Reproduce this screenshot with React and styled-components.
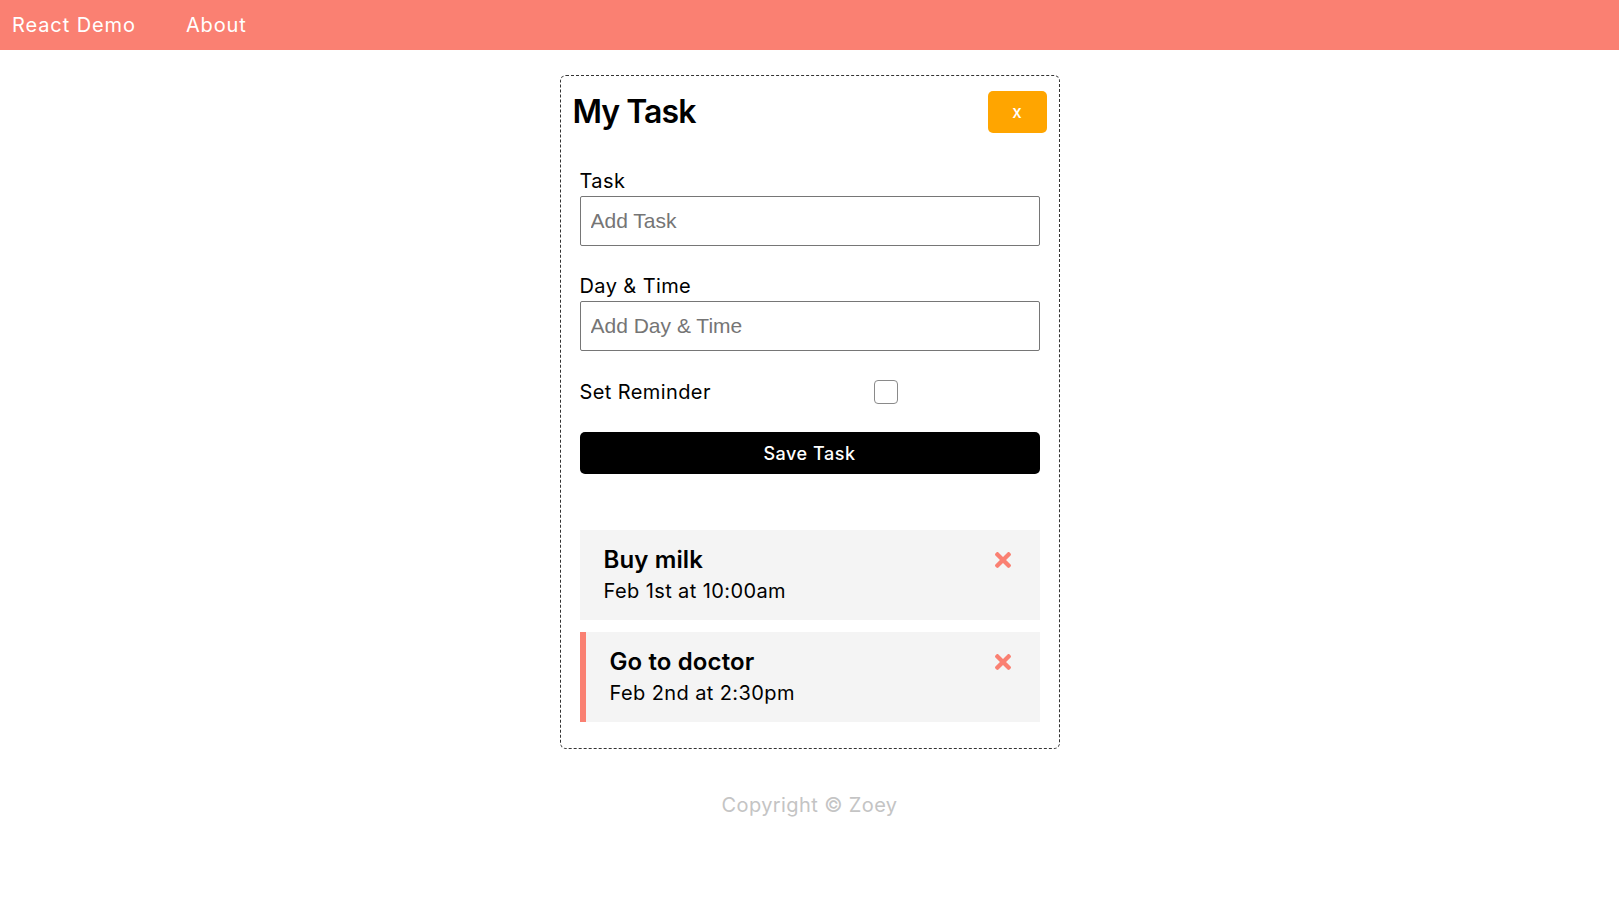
import React from "react";
import styled, { createGlobalStyle } from "styled-components";

const GlobalStyle = createGlobalStyle`
  * { box-sizing: border-box; }
  body {
    margin: 0;
    font-family: Inter, "Open Sans", sans-serif;
    color: #000;
    background: #fff;
  }
`;

const NavBar = styled.nav`
  height: 50px;
  background: #fa8072;
  display: flex;
  align-items: center;
  gap: 50px;
  padding: 0 12px;
`;

const NavLink = styled.a`
  color: #fff;
  font-size: 20px;
  letter-spacing: 0.045em;
  text-decoration: none;
  line-height: 28px;
`;

const Card = styled.main`
  width: 500px;
  margin: 25px auto 0;
  border: 1px dashed #333;
  border-radius: 6px;
`;

const Header = styled.header`
  display: flex;
  justify-content: space-between;
  align-items: center;
  padding: 15px 12px 0;
`;

const Title = styled.h1`
  margin: 0;
  font-size: 32px;
  font-weight: 600;
  letter-spacing: -0.03em;
  line-height: 42px;
`;

const CloseButton = styled.button`
  width: 59px;
  height: 42px;
  border: none;
  border-radius: 5px;
  background: #ffa500;
  color: #fff;
  font-family: inherit;
  font-size: 17px;
  font-weight: 500;
  cursor: pointer;
`;

const Body = styled.div`
  padding: 34px 19px 26px;
`;

const Form = styled.form`
  display: flex;
  flex-direction: column;
  gap: 26px;
`;

const Field = styled.div`
  display: flex;
  flex-direction: column;
  gap: 1px;
`;

const Label = styled.label`
  font-size: 20px;
  line-height: 28px;
  letter-spacing: 0.02em;
`;

const TextInput = styled.input`
  height: 50px;
  width: 100%;
  border: 1px solid #767676;
  border-radius: 2px;
  padding: 0 10px;
  font-family: "Liberation Sans", Arial, sans-serif;
  font-size: 21px;
  color: #000;
  &::placeholder { color: #757575; }
`;

const CheckRow = styled.div`
  display: flex;
  align-items: center;
  height: 29px;
`;

const CheckLabel = styled(Label)`
  flex: 1;
`;

const CheckWrap = styled.div`
  flex: 2;
  display: flex;
  justify-content: center;
`;

const CheckBox = styled.input`
  appearance: none;
  width: 24px;
  height: 24px;
  margin: 0;
  border: 1px solid #8a8a8a;
  border-radius: 4px;
  background: #fff;
`;

const SaveButton = styled.button`
  height: 42px;
  width: 100%;
  border: none;
  border-radius: 5px;
  background: #000;
  color: #fff;
  font-family: inherit;
  font-size: 18px;
  font-weight: 500;
  letter-spacing: 0.03em;
  cursor: pointer;
`;

const TaskList = styled.section`
  margin-top: 56px;
  display: flex;
  flex-direction: column;
  gap: 12px;
`;

const TaskItem = styled.div`
  background: #f4f4f4;
  border-left: ${(p) => (p.$reminder ? "6px solid #fa8072" : "0")};
  padding: 14px 29px 15px 24px;
`;

const TaskHead = styled.h3`
  margin: 0 0 1px;
  display: flex;
  justify-content: space-between;
  align-items: center;
  font-size: 24px;
  font-weight: 600;
  line-height: 32px;
  letter-spacing: 0.005em;
`;

const TaskDate = styled.p`
  margin: 0;
  font-size: 20px;
  line-height: 28px;
  letter-spacing: 0.02em;
`;

const Footer = styled.footer`
  margin-top: 42px;
  text-align: center;
  color: #c4c4c4;
  font-size: 20px;
  line-height: 28px;
  letter-spacing: 0.02em;
`;

const TimesIcon = () => (
  <svg width="16" height="16" viewBox="0 80 352 352" fill="#fa8072" aria-hidden="true">
    <path d="M242.72 256l100.07-100.07c12.28-12.28 12.28-32.19 0-44.48l-22.24-22.24c-12.28-12.28-32.19-12.28-44.48 0L176 189.28 75.93 89.21c-12.28-12.28-32.19-12.28-44.48 0L9.21 111.45c-12.28 12.28-12.28 32.19 0 44.48L109.28 256 9.21 356.07c-12.28 12.28-12.28 32.19 0 44.48l22.24 22.24c12.28 12.28 32.2 12.28 44.48 0L176 322.72l100.07 100.07c12.28 12.28 32.2 12.28 44.48 0l22.24-22.24c12.28-12.28 12.28-32.19 0-44.48L242.72 256z" />
  </svg>
);

const tasks = [
  { id: 1, text: "Buy milk", day: "Feb 1st at 10:00am", reminder: false },
  { id: 2, text: "Go to doctor", day: "Feb 2nd at 2:30pm", reminder: true },
];

export default function App() {
  return (
    <>
      <GlobalStyle />
      <NavBar>
        <NavLink href="#">React Demo</NavLink>
        <NavLink href="#">About</NavLink>
      </NavBar>
      <Card>
        <Header>
          <Title>My Task</Title>
          <CloseButton>x</CloseButton>
        </Header>
        <Body>
          <Form onSubmit={(e) => e.preventDefault()}>
            <Field>
              <Label>Task</Label>
              <TextInput type="text" placeholder="Add Task" />
            </Field>
            <Field>
              <Label>Day &amp; Time</Label>
              <TextInput type="text" placeholder="Add Day & Time" />
            </Field>
            <CheckRow>
              <CheckLabel>Set Reminder</CheckLabel>
              <CheckWrap>
                <CheckBox type="checkbox" />
              </CheckWrap>
            </CheckRow>
            <SaveButton type="submit">Save Task</SaveButton>
          </Form>
          <TaskList>
            {tasks.map((t) => (
              <TaskItem key={t.id} $reminder={t.reminder}>
                <TaskHead>
                  {t.text}
                  <TimesIcon />
                </TaskHead>
                <TaskDate>{t.day}</TaskDate>
              </TaskItem>
            ))}
          </TaskList>
        </Body>
      </Card>
      <Footer>Copyright © Zoey</Footer>
    </>
  );
}
